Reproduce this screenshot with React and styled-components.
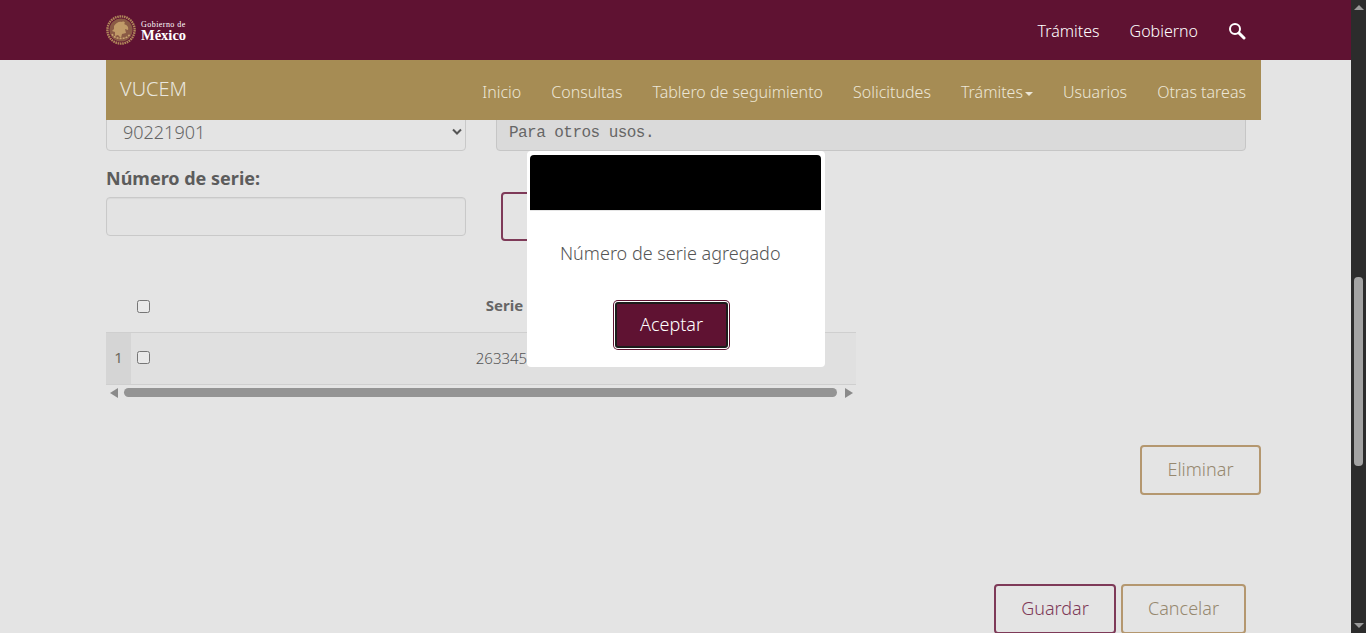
import React from 'react';
import styled, { createGlobalStyle } from 'styled-components';

const GlobalStyle = createGlobalStyle`
  html, body { margin: 0; padding: 0; height: 633px; overflow: hidden; }
  body { background: #e4e4e4; font-family: "Noto Sans", "Open Sans", sans-serif; color: #5f5f5f; }
  * { box-sizing: border-box; }
`;

const Shell = styled.div`
  display: flex;
  width: 1366px;
  height: 633px;
  overflow: hidden;
  position: relative;
`;
const Page = styled.div`
  flex: 1;
  min-width: 0;
  display: flex;
  flex-direction: column;
`;
const TopBar = styled.header`
  flex: none;
  height: 60px;
  background: #5f1232;
  padding: 0 105px 0 106px;
  display: flex;
  align-items: center;
  justify-content: space-between;
`;
const Logo = styled.div`
  display: flex;
  align-items: center;
  gap: 5px;
  height: 30px;
`;
const LogoText = styled.div`
  display: flex;
  flex-direction: column;
  color: #fff;
  font-family: "Liberation Serif", serif;
  padding-top: 1px;
  small { font-size: 8px; line-height: 8px; letter-spacing: .45px; }
  strong { font-size: 14.5px; line-height: 12px; font-weight: 700; }
`;
const TopLinks = styled.nav`
  display: flex;
  align-items: center;
  gap: 30px;
  padding-top: 2px;
`;
const TopLink = styled.span`
  color: #fff;
  font-size: 16px;
  font-weight: 300;
`;
const GoldNav = styled.nav`
  flex: none;
  position: relative;
  z-index: 2;
  height: 60px;
  margin: 0 90px 0 106px;
  padding: 0 15px 0 14px;
  background: #a68c54;
  display: flex;
  justify-content: space-between;
`;
const Brand = styled.span`
  color: #e9e6de;
  font-size: 20px;
  font-weight: 300;
  line-height: 57px;
`;
const NavItems = styled.div`
  display: flex;
  gap: 30px;
  padding-top: 21px;
  align-items: flex-start;
`;
const NavItem = styled.span`
  color: #ece6d6;
  font-size: 16px;
  font-weight: 300;
  line-height: 22px;
  display: flex;
  align-items: center;
  gap: 2px;
`;
const Caret = styled.i`
  width: 0;
  height: 0;
  margin-top: 3px;
  border-left: 4px solid transparent;
  border-right: 4px solid transparent;
  border-top: 4px solid #ece6d6;
`;
const Content = styled.main`
  flex: 1;
  min-height: 0;
  margin-top: -6px;
  padding: 0 90px 0 106px;
  display: flex;
  flex-direction: column;
`;
const TopRow = styled.div`
  display: flex;
  gap: 30px;
  padding-right: 15px;
`;
const SelectBox = styled.div`
  width: 360px;
  height: 37px;
  flex: none;
  border: 1px solid #c9c9c9;
  border-radius: 4px;
  padding: 0 2px 2px 16px;
  display: flex;
  align-items: center;
  justify-content: space-between;
  font-size: 18px;
  font-weight: 300;
  color: #666;
`;
const ReadOnlyArea = styled.div`
  flex: 1;
  height: 37px;
  background: #dadada;
  border: 1px solid #c6c6c6;
  border-radius: 4px;
  padding: 0 12px;
  display: flex;
  align-items: center;
  font-family: "Liberation Mono", monospace;
  font-size: 16px;
  letter-spacing: -.54px;
  color: #666;
`;
const SerieRow = styled.div`
  display: flex;
  gap: 35px;
  margin-top: 15px;
`;
const Field = styled.div`
  width: 360px;
  flex: none;
`;
const Label = styled.label`
  display: block;
  font-size: 18px;
  font-weight: 700;
  line-height: 24px;
  color: #5c5c5c;
`;
const TextInput = styled.div`
  height: 39px;
  margin-top: 7px;
  border: 1px solid #c9c9c9;
  border-radius: 4px;
  background: #e3e3e3;
  box-shadow: inset 0 1px 1px rgba(0, 0, 0, .05);
`;
const Button = styled.button`
  height: 50px;
  width: ${p => p.$width}px;
  flex: none;
  background: transparent;
  border: 2px solid ${p => (p.$primary ? '#7e3a58' : '#b4976f')};
  border-radius: 4px;
  font-family: inherit;
  font-size: 18px;
  font-weight: 300;
  color: ${p => (p.$primary ? '#7e3a58' : '#96886f')};
  padding: 0 0 3px;
`;
const AddButton = styled(Button)`
  margin-top: 26px;
  height: 49px;
`;
const Grid = styled.div`
  width: 750px;
  margin-top: 40px;
  font-size: 15px;
`;
const GridHeader = styled.div`
  height: 52px;
  display: grid;
  grid-template-columns: 25px 25px 1fr;
  align-items: center;
  border-bottom: 1px solid #cfcfcf;
`;
const GridRow = styled.div`
  height: 52px;
  display: grid;
  grid-template-columns: 25px 25px 1fr;
  align-items: center;
  background: #e0e0e0;
  border-bottom: 1px solid #cfcfcf;
`;
const RowNumber = styled.div`
  height: 100%;
  background: #d5d5d5;
  display: flex;
  align-items: center;
  justify-content: center;
  padding-bottom: 3px;
  color: #6e6a5e;
  font-size: 15px;
`;
const Check = styled.span`
  display: block;
  width: 13px;
  height: 13px;
  margin: ${p => (p.$row ? '-3px' : '0')} 0 0 6px;
  border: 1px solid #767676;
  border-radius: 2.5px;
  background: #e9e9e9;
`;
const HeadCell = styled.div`
  text-align: center;
  padding: 0 3px 3px 0;
  font-weight: 700;
  color: #666;
`;
const BodyCell = styled.div`
  text-align: center;
  padding: 0 9px 2px 0;
  font-weight: 300;
  color: #555;
`;
const HScroll = styled.div`
  height: 13px;
  margin-top: 1px;
  display: flex;
  align-items: center;
  gap: 6px;
  padding: 0 3px 0 4px;
`;
const HThumb = styled.div`
  flex: 1;
  height: 9px;
  margin-right: 2px;
  border-radius: 5px;
  background: #949494;
`;
const Arrow = styled.i`
  flex: none;
  width: 0;
  height: 0;
  border-top: 5px solid transparent;
  border-bottom: 5px solid transparent;
  ${p => (p.$left ? 'border-right: 8px solid #8a8a8a;' : 'border-left: 8px solid #8a8a8a;')}
`;
const EliminarRow = styled.div`
  display: flex;
  justify-content: flex-end;
  margin-top: 46px;
`;
const FooterRow = styled.div`
  display: flex;
  justify-content: flex-end;
  gap: 5px;
  margin-top: 89px;
  padding-right: 15px;
`;
const ScrollBar = styled.aside`
  flex: none;
  width: 15px;
  height: 633px;
  background: #2c2c2c;
  display: flex;
  flex-direction: column;
  align-items: center;
`;
const ScrollUp = styled.i`
  margin-top: 5px;
  width: 0;
  height: 0;
  border-left: 5px solid transparent;
  border-right: 5px solid transparent;
  border-bottom: 5px solid #9a9a9a;
`;
const ScrollThumb = styled.div`
  width: 9px;
  height: 189px;
  margin-top: 267px;
  border-radius: 4px;
  background: #a3a3a3;
`;
const ScrollDown = styled.i`
  margin-top: auto;
  margin-bottom: 5px;
  width: 0;
  height: 0;
  border-left: 5px solid transparent;
  border-right: 5px solid transparent;
  border-top: 5px solid #9a9a9a;
`;
const Modal = styled.div`
  position: absolute;
  left: 527px;
  top: 151px;
  width: 298px;
  height: 216px;
  z-index: 5;
  background: #fff;
  border-radius: 4px;
  padding: 4px 4px 0 3px;
  display: flex;
  flex-direction: column;
`;
const ModalHead = styled.div`
  height: 56px;
  flex: none;
  background: #000;
  border-radius: 4px 4px 0 0;
  border-bottom: 1px solid #e5e5e5;
`;
const ModalText = styled.p`
  margin: 30px 0 0 30px;
  font-size: 18px;
  font-weight: 300;
  line-height: 24px;
  color: #555;
`;
const ModalFoot = styled.div`
  margin-top: 37px;
  display: flex;
  justify-content: center;
  padding-right: 8px;
`;
const AcceptButton = styled.button`
  width: 113px;
  height: 46px;
  background: #5f1232;
  border: 2px solid #1c1c1c;
  border-radius: 3px;
  box-shadow: 0 0 0 1px #fff, 0 0 0 2px #5f1232;
  color: #fff;
  font-family: inherit;
  font-size: 18px;
  font-weight: 300;
  padding: 0 0 2px;
`;

const Emblem = () => (
  <svg width="30" height="30" viewBox="0 0 30 30">
    <circle cx="15" cy="15" r="13.6" fill="none" stroke="#b0875a" strokeWidth="2.4" strokeDasharray="1.6 .7" />
    <circle cx="15" cy="15" r="11.6" fill="#8a5a45" />
    <path d="M8 11c2-3 5-5 8-4 1-1 3 0 3 1l-1 1c3 1 5 3 4 6l-3-1 1 4-4 1-1 4-3-3-3 1v-4l-3-1 2-2z" fill="#c09a68" />
    <path d="M6 19c3 6 15 6 18 0" fill="none" stroke="#c9a470" strokeWidth="1.6" strokeDasharray="2 1" />
  </svg>
);

const SearchIcon = () => (
  <svg width="18" height="18" viewBox="0 0 18 18" fill="none" stroke="#fff">
    <circle cx="7" cy="7" r="5" strokeWidth="2" />
    <path d="M11 11l5 5" strokeWidth="3" strokeLinecap="round" />
  </svg>
);

const Chevron = () => (
  <svg width="12" height="8" viewBox="0 0 12 8" fill="none" stroke="#555" strokeWidth="2">
    <path d="M2 1.5l4 4 4-4" />
  </svg>
);

const navLinks = ['Inicio', 'Consultas', 'Tablero de seguimiento', 'Solicitudes', 'Trámites', 'Usuarios', 'Otras tareas'];

export default function App() {
  return (
    <Shell>
      <GlobalStyle />
      <Page>
        <TopBar>
          <Logo>
            <Emblem />
            <LogoText>
              <small>Gobierno de</small>
              <strong>México</strong>
            </LogoText>
          </Logo>
          <TopLinks>
            <TopLink>Trámites</TopLink>
            <TopLink>Gobierno</TopLink>
            <SearchIcon />
          </TopLinks>
        </TopBar>
        <GoldNav>
          <Brand>VUCEM</Brand>
          <NavItems>
            {navLinks.map(link => (
              <NavItem key={link}>
                {link}
                {link === 'Trámites' && <Caret />}
              </NavItem>
            ))}
          </NavItems>
        </GoldNav>
        <Content>
          <TopRow>
            <SelectBox>
              90221901
              <Chevron />
            </SelectBox>
            <ReadOnlyArea>Para otros usos.</ReadOnlyArea>
          </TopRow>
          <SerieRow>
            <Field>
              <Label>Número de serie:</Label>
              <TextInput />
            </Field>
            <AddButton $primary $width={120} />
          </SerieRow>
          <Grid>
            <GridHeader>
              <span />
              <Check />
              <HeadCell>Serie</HeadCell>
            </GridHeader>
            <GridRow>
              <RowNumber>1</RowNumber>
              <Check $row />
              <BodyCell>263345</BodyCell>
            </GridRow>
            <HScroll>
              <Arrow $left />
              <HThumb />
              <Arrow />
            </HScroll>
          </Grid>
          <EliminarRow>
            <Button $width={121}>Eliminar</Button>
          </EliminarRow>
          <FooterRow>
            <Button $primary $width={122}>Guardar</Button>
            <Button $width={125}>Cancelar</Button>
          </FooterRow>
        </Content>
      </Page>
      <ScrollBar>
        <ScrollUp />
        <ScrollThumb />
        <ScrollDown />
      </ScrollBar>
      <Modal>
        <ModalHead />
        <ModalText>Número de serie agregado</ModalText>
        <ModalFoot>
          <AcceptButton>Aceptar</AcceptButton>
        </ModalFoot>
      </Modal>
    </Shell>
  );
}
